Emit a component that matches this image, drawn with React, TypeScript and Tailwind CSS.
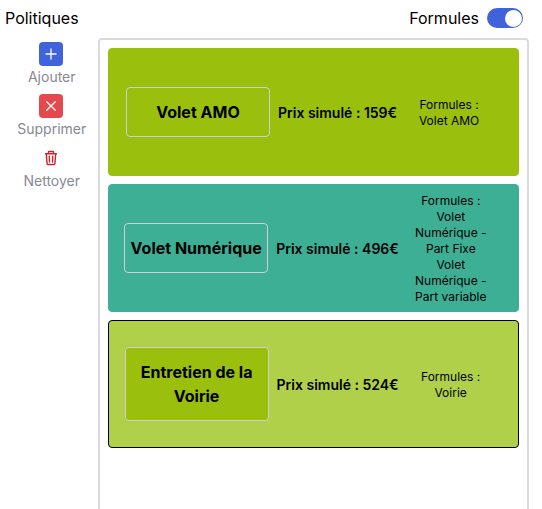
type Policy = {
  name: string;
  price: number;
  formulas: string[];
  card: string;
  box: string;
};

const policies: Policy[] = [
  { name: "Volet AMO", price: 159, formulas: ["Volet AMO"], card: "bg-[#9abf0c] border-[#9abf0c] pl-[17px]", box: "bg-[#9abf0c]" },
  { name: "Volet Numérique", price: 496, formulas: ["Volet Numérique - Part Fixe", "Volet Numérique - Part variable"], card: "bg-[#3caf95] border-[#3caf95] pl-[15.2px]", box: "bg-[#3caf95]" },
  { name: "Entretien de la Voirie", price: 524, formulas: ["Voirie"], card: "bg-[#b1d04a] border-black pl-[15.6px]", box: "bg-[#9abf0c]" },
];

function Plus() {
  return (
    <svg className="size-4" viewBox="0 0 16 16" fill="none" stroke="#fff" strokeWidth="1.3" strokeLinecap="round">
      <path d="M8 3v10M3 8h10" />
    </svg>
  );
}

function Cross() {
  return (
    <svg className="size-4" viewBox="0 0 16 16" fill="none" stroke="#fff" strokeWidth="1.3" strokeLinecap="round">
      <path d="M3.7 3.7l8.6 8.6M12.3 3.7l-8.6 8.6" />
    </svg>
  );
}

function Trash() {
  return (
    <svg className="size-4" viewBox="0 0 16 16" fill="none" stroke="#c9252d" strokeWidth="1.4" strokeLinecap="round" strokeLinejoin="round">
      <path d="M2.6 3.7h10.8M5.5 3.5V2.2c0-.4.3-.7.7-.7h3.6c.4 0 .7.3.7.7v1.3M3.3 4l.8 9.6c0 .5.4.9.9.9h6c.5 0 .9-.4.9-.9L12.7 4M6.3 6.3l.2 5.700M9.7 6.3l-.2 5.7" />
    </svg>
  );
}

const actions = [
  { label: "Ajouter", color: "bg-[#4063dc]", icon: <Plus /> },
  { label: "Supprimer", color: "bg-[#e5484d]", icon: <Cross /> },
  { label: "Nettoyer", color: "", icon: <Trash /> },
];

export default function App() {
  return (
    <div className="flex h-[509px] w-[542px] flex-col overflow-hidden bg-white font-['Inter',sans-serif] text-base text-black [font-feature-settings:'calt'_0]">
      <header className="flex h-[38px] shrink-0 items-center justify-between pr-[19px] pb-[2px] pl-[5px]">
        <span>Politiques</span>
        <div className="flex items-center gap-2">
          <span>Formules</span>
          <button role="switch" aria-checked="true" aria-label="Formules" className="flex h-5 w-9 items-center justify-end rounded-full bg-[#4063dc] pr-px">
            <span className="size-[17px] rounded-full bg-white" />
          </button>
        </div>
      </header>
      <div className="flex min-h-0 flex-1 pl-1">
        <aside className="flex w-[94px] shrink-0 flex-col items-center pt-1">
          {actions.map((a) => (
            <div key={a.label} className="flex h-[52px] flex-col items-center text-sm leading-[22px] text-[#868994]">
              <button aria-label={a.label} className={`flex size-6 items-center justify-center rounded-[4px] ${a.color}`}>
                {a.icon}
              </button>
              <span className="-mr-[1.5px]">{a.label}</span>
            </div>
          ))}
        </aside>
        <main className="flex h-[490px] w-[431px] shrink-0 flex-col gap-2 rounded-[4px] border-2 border-[#d9d9e0] p-2">
          {policies.map((p) => (
            <article key={p.name} className={`flex h-32 shrink-0 items-center gap-2 rounded-[4px] border ${p.card}`}>
              <h2 className={`w-36 shrink-0 rounded-[4px] border border-[#cdced6] px-1 py-3 text-center text-base font-bold ${p.box}`}>
                {p.name}
              </h2>
              <p className="shrink-0 pt-0.5 text-sm font-semibold whitespace-nowrap">Prix simulé : {p.price}€</p>
              <div className="w-[88px] shrink-0 pt-0.5 text-center text-xs leading-4">
                <p>Formules :</p>
                {p.formulas.map((f) => <p key={f}>{f}</p>)}
              </div>
            </article>
          ))}
        </main>
      </div>
    </div>
  );
}
